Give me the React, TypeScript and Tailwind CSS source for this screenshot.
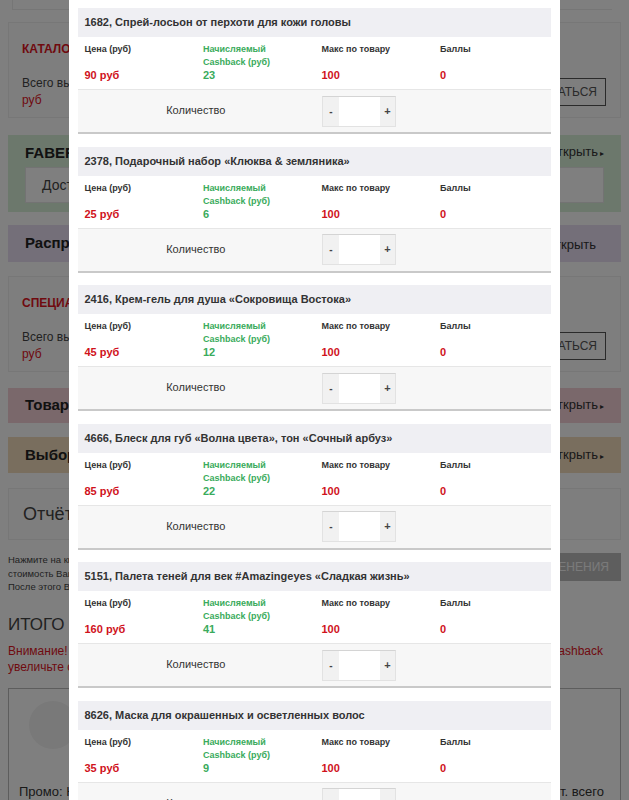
import React from "react";

type Item = { code: string; name: string; price: number; cashback: number };

const items: Item[] = [
  { code: "1682", name: "Спрей-лосьон от перхоти для кожи головы", price: 90, cashback: 23 },
  { code: "2378", name: "Подарочный набор «Клюква & земляника»", price: 25, cashback: 6 },
  { code: "2416", name: "Крем-гель для душа «Сокровища Востока»", price: 45, cashback: 12 },
  { code: "4666", name: "Блеск для губ «Волна цвета», тон «Сочный арбуз»", price: 85, cashback: 22 },
  { code: "5151", name: "Палета теней для век #Amazingeyes «Сладкая жизнь»", price: 160, cashback: 41 },
  { code: "8626", name: "Маска для окрашенных и осветленных волос", price: 35, cashback: 9 },
];

function ProductCard({ item }: { item: Item }) {
  return (
    <div className="mb-[12.5px] border-b-2 border-[#c9c9c9]">
      <div className="flex h-[29px] items-center bg-[#efeff3] px-[7px] text-[11px] font-bold text-[#333]">
        {item.code}, {item.name}
      </div>
      <div className="grid h-[52px] grid-cols-[118.5px_118.5px_118.5px_110px] bg-white pl-[7px] pt-[6px] text-[9px] font-bold leading-[13px]">
        <div className="flex flex-col">
          <span className="text-[#333]">Цена (руб)</span>
          <span className="mt-auto pb-[7px] text-[11px] text-[#d0121c]">{item.price} руб</span>
        </div>
        <div className="flex flex-col">
          <span className="text-[#3aab5c]">
            Начисляемый
            <br />
            Cashback (руб)
          </span>
          <span className="mt-auto pb-[7px] text-[11px] text-[#3aab5c]">{item.cashback}</span>
        </div>
        <div className="flex flex-col">
          <span className="text-[#333]">Макс по товару</span>
          <span className="mt-auto pb-[7px] text-[11px] text-[#d0121c]">100</span>
        </div>
        <div className="flex flex-col">
          <span className="text-[#333]">Баллы</span>
          <span className="mt-auto pb-[7px] text-[11px] text-[#d0121c]">0</span>
        </div>
      </div>
      <div className="grid h-[43px] grid-cols-2 border-t border-[#e6e6e6] bg-[#f7f7f7]">
        <div className="flex items-center justify-center pb-[1px] text-[11px] text-[#333]">Количество</div>
        <div className="flex items-center pl-[8px]">
          <div className="flex h-[31px] border border-[#e2e2e2] border-t-[#d4d4d4]">
            <button className="w-[16px] bg-[#f1f1f1] text-[10px] font-bold text-[#444]">-</button>
            <input className="w-[41px] bg-white outline-none" />
            <button className="w-[15px] bg-[#f1f1f1] text-[11px] font-bold text-[#444]">+</button>
          </div>
        </div>
      </div>
    </div>
  );
}

function OpenLink({ label, arrow = true }: { label: string; arrow?: boolean }) {
  return (
    <span className="text-[13px] leading-[17px] text-[#333]">
      {label}
      {arrow && <span className="ml-[2px] text-[8px]">▸</span>}
    </span>
  );
}

function OfferBox({ title }: { title: string }) {
  return (
    <div className="h-[96px] border border-[#eeeeee] bg-[#fcfcfc] px-[13px] pt-[18px]">
      <div className="text-[12px] font-bold leading-[16px] text-[#e0141e]">{title}</div>
      <div className="mt-[18px] flex items-start justify-between">
        <div className="text-[12px] leading-[17px] text-[#444]">
          Всего выбрано на сумму 0
          <br />
          <span className="text-[#e0141e]">руб</span>
        </div>
        <div className="mr-[1px] mt-[3px] flex h-[28px] items-center whitespace-nowrap border border-[#555] px-[8px] text-[12px] text-[#555]">
          ВОСПОЛЬЗОВАТЬСЯ
        </div>
      </div>
    </div>
  );
}

export default function App() {
  return (
    <div className="relative h-[800px] w-[629px] overflow-hidden bg-white font-['Liberation_Sans',Arial,sans-serif]">
      {/* page behind the modal */}
      <div className="px-[8px]">
        <div className="ml-[4px] h-[10px] w-[600px] border-b border-l border-[#ececec]" />

        <div className="mt-[12px]">
          <OfferBox title="КАТАЛОГ ФАБЕРЛИК" />
        </div>

        <div className="mt-[17px] h-[77px] bg-[#d9f0d9] px-[17px] pt-[8px]">
          <div className="flex items-center justify-between">
            <span className="text-[15px] font-bold leading-[17px] text-[#222]">FABERLIC</span>
            <OpenLink label="Открыть" />
          </div>
          <div className="mt-[5px] flex h-[36px] items-center border border-[#e6e6e6] bg-white px-[16px] text-[14px] text-[#444]">
            Доступно
          </div>
        </div>

        <div className="mt-[13px] flex h-[37px] items-center justify-between bg-[#e8def2] px-[17px]">
          <span className="text-[15px] font-bold text-[#222]">Распродажа</span>
          <span className="mr-[8px]">
            <OpenLink label="Открыть" arrow={false} />
          </span>
        </div>

        <div className="mt-[14px]">
          <OfferBox title="СПЕЦИАЛЬНОЕ ПРЕДЛОЖЕНИЕ" />
        </div>

        <div className="mt-[16px] flex h-[35px] items-center justify-between bg-[#f5d0d6] px-[17px]">
          <span className="text-[15px] font-bold text-[#222]">Товары</span>
          <OpenLink label="Открыть" />
        </div>

        <div className="mt-[14px] flex h-[36px] items-center justify-between bg-[#f2dcbc] px-[17px]">
          <span className="text-[15px] font-bold text-[#222]">Выбор</span>
          <OpenLink label="Открыть" />
        </div>

        <div className="mt-[15px] flex h-[52px] items-center border border-[#eeeeee] bg-[#fcfcfc] px-[14px] text-[18px] text-[#444]">
          Отчёт
        </div>

        <div className="mt-[13px] flex items-start justify-between">
          <div className="text-[9.5px] leading-[13.5px] text-[#444]">
            Нажмите на кнопку, чтобы пересчитать
            <br />
            стоимость Вашего заказа.
            <br />
            После этого Вы увидите итог.
          </div>
          <div className="flex h-[28px] items-center justify-end whitespace-nowrap bg-[#bdbdbd] pl-[12px] pr-[12px] text-[12px] text-[#f5f5f5]">
            ПРИМЕНИТЬ ИЗМЕНЕНИЯ
          </div>
        </div>

        <div className="mt-[18px] text-[17px] text-[#444]">ИТОГО ПО ЗАКАЗУ</div>
        <div className="mt-[6px] flex justify-between text-[12px] leading-[16px] text-[#e0141e]">
          <span>
            Внимание!
            <br />
            увеличьте сумму заказа
          </span>
          <span className="mr-[18px]">Cashback</span>
        </div>

        <div className="mt-[13px] h-[140px] border border-[#bbb] px-[10px] pt-[12px]">
          <div className="ml-[10px] h-[48px] w-[48px] rounded-full bg-[#f2f2f2]" />
          <div className="mt-[33px] flex justify-between text-[13px] text-[#333]">
            <span>Промо: Кешбэк</span>
            <span className="mr-[6px]">шт. всего</span>
          </div>
        </div>
      </div>

      {/* backdrop */}
      <div className="absolute inset-0 bg-[rgba(0,0,0,0.5)]" />

      {/* modal */}
      <div className="absolute bottom-0 left-[69px] top-0 w-[490.5px] overflow-hidden bg-white pl-[8.5px] pr-[9px] pt-[8px]">
        {items.map((item) => (
          <ProductCard key={item.code} item={item} />
        ))}
      </div>
    </div>
  );
}
